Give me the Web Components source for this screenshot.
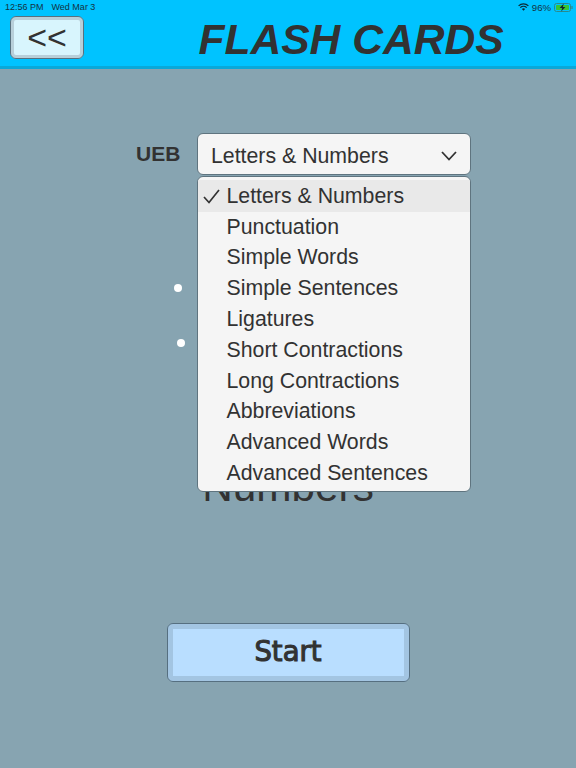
<!DOCTYPE html>
<html>
<head>
<meta charset="utf-8">
<style>
html, body { margin: 0; height: 100%; }
body { background: #87a4b1; font-family: "Liberation Sans", Arial, sans-serif; color: #323232; }
</style>
</head>
<body>
<flash-screen>
  <status-bar slot="status"></status-bar>
  <back-button slot="back">&lt;&lt;</back-button>
  <span slot="title">FLASH CARDS</span>
  <deck-select label="UEB" value="Letters &amp; Numbers">
    <deck-option selected>Letters &amp; Numbers</deck-option>
    <deck-option>Punctuation</deck-option>
    <deck-option>Simple Words</deck-option>
    <deck-option>Simple Sentences</deck-option>
    <deck-option>Ligatures</deck-option>
    <deck-option>Short Contractions</deck-option>
    <deck-option>Long Contractions</deck-option>
    <deck-option>Abbreviations</deck-option>
    <deck-option>Advanced Words</deck-option>
    <deck-option>Advanced Sentences</deck-option>
  </deck-select>
  <start-button slot="start">Start</start-button>
</flash-screen>

<script>
// Pasek stanu na samej gorze ekranu
class StatusBar extends HTMLElement {
  constructor() {
    super();
    this.attachShadow({mode: "open"});
    this.shadowRoot.innerHTML = `
<style>
:host { display: flex; justify-content: space-between; align-items: center; height: 14px; padding: 0 3px 0 5px; font-size: 9px; color: #14323f; }
.left { display: flex; gap: 8px; }
.right { display: flex; align-items: center; gap: 3px; font-size: 9.6px; }
svg { display: block; }
</style>
<div class="left"><span>12:56 PM</span><span>Wed Mar 3</span></div>
<div class="right">
  <svg width="11" height="8" viewBox="0 0 11 8"><path d="M0.6 2.9A7 7 0 0 1 10.4 2.9M2.3 4.6A4.6 4.6 0 0 1 8.7 4.6" fill="none" stroke="#0c2a36" stroke-width="1.3"/><path d="M3.9 6.1A2.3 2.3 0 0 1 7.1 6.1L5.5 7.8Z" fill="#0c2a36"/></svg>
  <span>96%</span>
  <svg width="19" height="9" viewBox="0 0 19 9"><rect x="0.5" y="0.5" width="16" height="8" rx="2" fill="none" stroke="#2b8a8c"/><rect x="2" y="2" width="13" height="5" rx="0.8" fill="#37c634"/><rect x="17.4" y="3" width="1.2" height="3" fill="#2b8a8c"/><path d="M9.8 0.4L5.6 5H8.2L7.2 8.6L11.4 4H8.8Z" fill="#12242c"/></svg>
</div>`;
  }
}
customElements.define("status-bar", StatusBar);

class BackButton extends HTMLElement {
  constructor() {
    super();
    this.attachShadow({mode: "open"});
    this.shadowRoot.innerHTML = `
<style>
:host { display: flex; align-items: center; justify-content: center; box-sizing: border-box; width: 74px; height: 43px; background: #d8f5fd; border: 1px solid #58717f; border-radius: 6px; box-shadow: inset 0 0 0 3px #b8cfd9; font-size: 34px; color: #323232; }
</style>
<slot></slot>`;
  }
}
customElements.define("back-button", BackButton);

class DeckOption extends HTMLElement {
  constructor() {
    super();
    this.attachShadow({mode: "open"});
    this.shadowRoot.innerHTML = `
<style>
:host { display: flex; align-items: center; box-sizing: border-box; height: 30.8px; padding-left: 28.5px; font-size: 21.3px; position: relative; }
:host([selected]) { background: #e9e9e9; height: 31.8px; padding-top: 2px; }
svg { display: none; position: absolute; left: 5px; top: 9px; }
:host([selected]) svg { display: block; }
</style>
<svg width="17" height="15" viewBox="0 0 17 15"><path d="M1 8L6 13.5L16 1" fill="none" stroke="#323232" stroke-width="1.7"/></svg>
<slot></slot>`;
  }
}
customElements.define("deck-option", DeckOption);

class DeckSelect extends HTMLElement {
  constructor() {
    super();
    this.attachShadow({mode: "open"});
    this.shadowRoot.innerHTML = `
<style>
:host { display: flex; align-items: center; position: relative; }
.label { font-weight: bold; font-size: 21px; width: 61px; padding-bottom: 1px; }
.box { display: flex; align-items: center; justify-content: space-between; box-sizing: border-box; width: 274px; height: 42px; padding: 3px 13px 0 13px; background: #f5f5f5; border: 1px solid #5f747f; border-radius: 6px; font-size: 21.3px; }
.value { margin-top: 2px; }
.menu { position: absolute; left: 61px; top: 43px; box-sizing: border-box; width: 274px; height: 316px; padding-top: 3px; background: #f5f5f5; border: 1px solid #5f747f; border-radius: 6px; overflow: hidden; }
</style>
<div class="label"></div>
<div class="box"><span class="value"></span>
  <svg width="16" height="10" viewBox="0 0 16 10"><path d="M1 1L8 8.5L15 1" fill="none" stroke="#323232" stroke-width="1.8"/></svg>
</div>
<div class="menu"><slot></slot></div>`;
  }
  connectedCallback() {
    this.shadowRoot.querySelector(".label").textContent = this.getAttribute("label");
    this.shadowRoot.querySelector(".value").textContent = this.getAttribute("value");
  }
}
customElements.define("deck-select", DeckSelect);

class StartButton extends HTMLElement {
  constructor() {
    super();
    this.attachShadow({mode: "open"});
    this.shadowRoot.innerHTML = `
<style>
:host { display: flex; align-items: center; justify-content: center; box-sizing: border-box; width: 243px; height: 59px; background: #b9deff; border: 1px solid #566f80; border-radius: 6px; box-shadow: inset 0 0 0 5px #a3c5e2; font-family: "DejaVu Sans", sans-serif; font-size: 27.5px; -webkit-text-stroke: 1.1px #323232; padding-bottom: 3px; }
</style>
<slot></slot>`;
  }
}
customElements.define("start-button", StartButton);

class FlashScreen extends HTMLElement {
  constructor() {
    super();
    this.attachShadow({mode: "open"});
    this.shadowRoot.innerHTML = `
<style>
:host { display: flex; flex-direction: column; height: 768px; overflow: hidden; }
header { box-sizing: border-box; height: 69px; background: #00c3ff; border-bottom: 3px solid #0aa8d8; }
.bar { display: flex; align-items: flex-start; padding: 3px 0 0 10px; margin-top: -1px; }
.title { flex: 1; text-align: center; font-weight: bold; font-style: italic; font-size: 42.6px; line-height: 46px; padding-left: 42px; }
main { flex: 1; display: flex; flex-direction: column; align-items: center; position: relative; }
.select { align-self: flex-start; margin: 64px 0 0 136px; position: relative; z-index: 1; }
.start { margin-top: 448px; }
.big { position: absolute; left: 0; right: 0; top: 390px; text-align: center; font-size: 42.3px; line-height: 56px; }
.dot { position: absolute; width: 8px; height: 8px; border-radius: 50%; background: #fff; }
</style>
<header>
  <slot name="status"></slot>
  <div class="bar"><slot name="back"></slot><div class="title"><slot name="title"></slot></div></div>
</header>
<main>
  <div class="big">Numbers</div>
  <i class="dot" style="left:174px;top:215px"></i>
  <i class="dot" style="left:177px;top:270px"></i>
  <div class="select"><slot></slot></div>
  <div class="start"><slot name="start"></slot></div>
</main>`;
  }
}
customElements.define("flash-screen", FlashScreen);
</script>
</body>
</html>
